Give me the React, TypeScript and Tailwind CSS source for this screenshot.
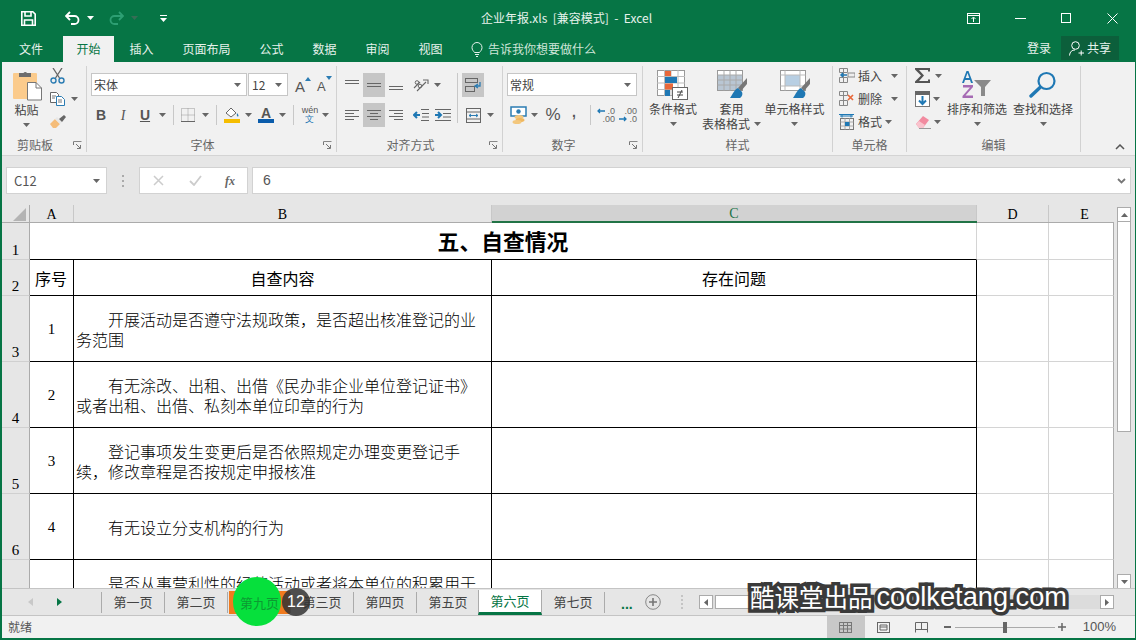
import React from "react";

const FONT = '"Microsoft YaHei","Noto Sans CJK SC","Noto Sans",sans-serif';
const SERIF = '"Liberation Serif","Noto Sans CJK SC",serif';

function Caret({ className = "" }: { className?: string }) {
  return (
    <svg width="7" height="4" viewBox="0 0 7 4" className={className}>
      <path d="M0 0h7L3.5 4z" fill="#666" />
    </svg>
  );
}

function Slot({ w, children, className = "" }: { w: string; children?: React.ReactNode; className?: string }) {
  return <div className={`${w} h-full flex items-center justify-center shrink-0 ${className}`}>{children}</div>;
}

function Launcher() {
  return (
    <div className="w-[18px] h-full flex items-center justify-center shrink-0">
      <svg width="9" height="9" viewBox="0 0 9 9" fill="none">
        <path d="M.5 4V.5H8.5" stroke="#888" />
        <path d="M.5 1v3M3 3l4 4M4 7.5h3.5V4" stroke="#777" />
      </svg>
    </div>
  );
}

function Group({ w, label, launcher, children }: { w: string; label: string; launcher?: boolean; children: React.ReactNode }) {
  return (
    <div className={`${w} shrink-0 pt-[4px]`}>
      <div className="h-[86px] border-r border-[#d2d2d2] flex flex-col">
        <div className="h-[72px]">{children}</div>
        <div className="h-[14px] flex items-center">
          <div className="flex-1 text-center text-[12px] leading-[14px] text-[#666]">{label}</div>
          {launcher && <Launcher />}
        </div>
      </div>
    </div>
  );
}

function Sep({ h = "h-[20px]", className = "" }: { h?: string; className?: string }) {
  return <div className={`w-px ${h} bg-[#c8c8c8] shrink-0 ${className}`} />;
}

function Lines({ spec }: { spec: number[][] }) {
  return (
    <svg width="14" height="12" viewBox="0 0 14 12" fill="none">
      {spec.map(([y, a, b], i) => (
        <path key={i} d={`M${a} ${y + 0.5}H${b}`} stroke="#666" />
      ))}
    </svg>
  );
}

function Paste() {
  return (
    <svg width="30" height="32" viewBox="0 0 30 32" fill="none">
      <rect x="0" y="4" width="24" height="26" rx="1" fill="#fbcb8c" />
      <path d="M6 8V4h4.500a2 2 0 0 1 3.500 0H18v4z" fill="#6d6d6d" />
      <path d="M14.500 13.500H23l5.500 5.500v12H14.500z" fill="#fff" stroke="#777" />
      <path d="M23 13.500V19h5.500" stroke="#777" />
    </svg>
  );
}

function Scissors() {
  return (
    <svg width="15" height="16" viewBox="0 0 15 16" fill="none">
      <path d="M3 0l6.500 10M12 0L5.500 10" stroke="#666" strokeWidth="1.300" />
      <circle cx="3.500" cy="12.500" r="2.500" stroke="#2b7cb3" strokeWidth="1.400" />
      <circle cx="11.500" cy="12.500" r="2.500" stroke="#2b7cb3" strokeWidth="1.400" />
    </svg>
  );
}

function CopyIcon() {
  return (
    <svg width="15" height="14" viewBox="0 0 15 14" fill="none">
      <path d="M.5.500h6l2 2v8H.5z" fill="#fff" stroke="#666" />
      <path d="M6.500 4.500h5l3 3v6h-8z" fill="#fff" stroke="#2b7cb3" />
      <path d="M2 4h4M2 6h3M8 8h4M8 10h4" stroke="#777" />
    </svg>
  );
}

function Brush() {
  return (
    <svg width="16" height="14" viewBox="0 0 16 14">
      <path d="M0 9l5-5 5 5-4 4H3z" fill="#f5bd7a" />
      <path d="M5 4l5 5 2-2-5-5z" fill="#e8e8e8" />
      <path d="M9 4l5-4 2 2-4 5z" fill="#666" />
    </svg>
  );
}

function AGrow({ up }: { up: boolean }) {
  return (
    <div className="relative w-[18px] h-[20px] flex items-end justify-start">
      <span className={`${up ? "text-[15px]" : "text-[13px]"} leading-[16px] text-[#555] font-['Liberation_Sans']`}>A</span>
      <svg width="6" height="4" viewBox="0 0 6 4" className={`absolute ${up ? "left-[10px] top-[2px]" : "left-[9px] top-[1px]"}`}>
        <path d={up ? "M0 4h6L3 0z" : "M0 0h6L3 4z"} fill="#2b7cb3" />
      </svg>
    </div>
  );
}

function Dotted() {
  return (
    <svg width="14" height="14" viewBox="0 0 14 14" fill="none">
      <rect x=".5" y=".5" width="13" height="13" stroke="#999" strokeDasharray="1 1" />
      <path d="M7 .5v13M.5 7h13" stroke="#999" strokeDasharray="1 1" />
      <path d="M0 13.500h14" stroke="#666" />
    </svg>
  );
}

function Bucket() {
  return (
    <svg width="17" height="16" viewBox="0 0 17 16">
      <path d="M2 6l5-5 5 5-5 4z" fill="#fff" stroke="#666" />
      <path d="M13 6c1.500 2 2 3 1 3.500S12.500 8 13 6z" fill="#2b7cb3" />
      <rect y="12" width="16" height="4" fill="#f5bd00" />
    </svg>
  );
}

function FontColor() {
  return (
    <div className="w-[16px] h-[16px] flex flex-col items-center">
      <span className="text-[14px] leading-[12px] text-[#555] font-bold font-['Liberation_Sans']">A</span>
      <div className="w-[16px] h-[4px] bg-[#0a5cab]" />
    </div>
  );
}

function Orientation() {
  return (
    <svg width="17" height="15" viewBox="0 0 17 15" fill="none" stroke="#666">
      <path d="M1 10l6-6M4 13l9-9M10 2h5v4" strokeWidth="1.100" />
      <circle cx="4" cy="4.500" r="1.800" />
      <circle cx="7" cy="8" r="1.800" />
    </svg>
  );
}

function Wrap() {
  return (
    <svg width="16" height="15" viewBox="0 0 16 15" fill="none">
      <rect x=".5" y=".5" width="12" height="4" stroke="#666" />
      <rect x=".5" y="8.500" width="9" height="5" stroke="#666" />
      <path d="M15 4v4h-4M13 6l-3 2 3 2" stroke="#2b7cb3" strokeWidth="1.300" />
    </svg>
  );
}

function Merge() {
  return (
    <svg width="15" height="15" viewBox="0 0 15 15" fill="none" stroke="#666">
      <rect x=".5" y=".5" width="14" height="14" />
      <path d="M.5 4h14M.5 11h14" />
      <path d="M3 7.500h9M3 7.500l2-1.500M3 7.500L5 9M12 7.500L10 6M12 7.500L10 9" stroke="#2b7cb3" />
    </svg>
  );
}

function Indent({ right }: { right?: boolean }) {
  return (
    <svg width="16" height="12" viewBox="0 0 16 12" fill="none">
      {right ? (
        <>
          <path d="M0 6h5M3 3l3 3-3 3" stroke="#1f78b4" strokeWidth="2" />
          <path d="M0 .5h16M8 4.500h8M8 8h8M0 11.500h16" stroke="#666" />
        </>
      ) : (
        <>
          <path d="M7 6H2M4 3L1 6l3 3" stroke="#1f78b4" strokeWidth="2" />
          <path d="M8 .5h8M9 4.500h7M9 8h7M8 11.500h8" stroke="#666" />
        </>
      )}
    </svg>
  );
}

function Currency() {
  return (
    <svg width="17" height="18" viewBox="0 0 17 18">
      <rect x="1" y="1" width="15" height="9" fill="#fff" stroke="#2b7cb3" strokeWidth="1.500" />
      <circle cx="8.500" cy="5.500" r="2.200" fill="#2b7cb3" />
      <ellipse cx="9" cy="11" rx="4.500" ry="2" fill="#f3c77d" />
      <ellipse cx="10" cy="14" rx="4.500" ry="2" fill="#f0b860" />
      <ellipse cx="7" cy="16" rx="4.500" ry="2" fill="#f3c77d" />
    </svg>
  );
}

function DecimalIcon({ dir }: { dir: "inc" | "dec" }) {
  const top = dir === "inc" ? ".0" : ".00";
  const bottom = dir === "inc" ? ".00" : ".0";
  return (
    <div className="w-[18px] h-[16px] relative flex flex-col items-end text-[9px] leading-[8px] text-[#666] font-['Liberation_Sans']">
      <span>{top}</span>
      <span>{bottom}</span>
      <svg width="8" height="6" viewBox="0 0 8 6" className={`absolute left-0 ${dir === "inc" ? "top-[1px]" : "top-[9px]"}`} fill="none">
        {dir === "inc" ? (
          <path d="M8 3H1M3 1L1 3l2 2" stroke="#1f78b4" strokeWidth="1.300" />
        ) : (
          <path d="M0 3h7M5 1l2 2-2 2" stroke="#1f78b4" strokeWidth="1.300" />
        )}
      </svg>
    </div>
  );
}

function CondFormat() {
  return (
    <svg width="32" height="30" viewBox="0 0 32 30" fill="none">
      <rect x=".5" y=".5" width="27" height="25" fill="#fff" stroke="#999" />
      <path d="M7.500 0v26M14 0v26M21 0v26M0 6.500h28M0 13h28M0 19.500h28" stroke="#bbb" />
      <rect x="8" y="1" width="6" height="5" fill="#e8683a" />
      <rect x="8" y="7" width="12" height="6" fill="#1f78b4" />
      <rect x="8" y="13.500" width="8" height="6" fill="#e8683a" />
      <rect x="8" y="20" width="5" height="6" fill="#1f78b4" />
      <rect x="15.500" y="17.500" width="15" height="12" fill="#fff" stroke="#666" />
      <path d="M20 22h6M20 25h6M25 20l-4 8" stroke="#444" />
    </svg>
  );
}

function TableFormat({ cell }: { cell?: boolean }) {
  return (
    <svg width="30" height="30" viewBox="0 0 30 30" fill="none">
      <rect x=".5" y=".5" width="25" height="20" fill="#fff" stroke="#999" />
      {cell ? (
        <>
          <rect x="5" y="5" width="15" height="11" fill="#b8cfe3" />
          <path d="M.5 5h25M.5 16h25M5 .5v20M20 .5v20" stroke="#bbb" />
        </>
      ) : (
        <>
          <rect x="1" y="5" width="24" height="15" fill="#b9c6d3" />
          <path d="M.5 5h25M.5 10h25M.5 15h25M7 .5v20M13 .5v20M19 .5v20" stroke="#aaa" />
        </>
      )}
      <path d="M30 8l-9 10 3 3 6-7z" fill="#777" />
      <path d="M21 18c-4 2-5 6-8 10h10c3-2 3-6 1-7z" fill="#1f78b4" />
    </svg>
  );
}

function CellInsert() {
  return (
    <svg width="16" height="15" viewBox="0 0 16 15" fill="none">
      <path d="M.5.500h8v4h-8zM.5 9.500h8v5h-8zM4.500.500v14" stroke="#888" />
      <path d="M9 5h7v4H9z" stroke="#888" fill="#eee" />
      <path d="M8 7H2M4 5L2 7l2 2" stroke="#1f78b4" strokeWidth="1.500" />
    </svg>
  );
}

function CellDelete() {
  return (
    <svg width="16" height="15" viewBox="0 0 16 15" fill="none">
      <path d="M.5.500h8v4h-8zM.5 9.500h8v5h-8zM4.500.500v14" stroke="#888" />
      <path d="M9 4l5 5M14 4l-5 5" stroke="#e8683a" strokeWidth="1.700" />
    </svg>
  );
}

function CellFormat() {
  return (
    <svg width="16" height="16" viewBox="0 0 16 16" fill="none">
      <path d="M0 .5h15M3 .5v3M12 .5v3M1 2h13" stroke="#1f78b4" />
      <rect x="1.500" y="4.500" width="13" height="11" stroke="#777" />
      <path d="M1.500 8h13M1.500 12h13M6 4.500v11M10.500 4.500v11" stroke="#aaa" />
      <rect x="6" y="8" width="4.500" height="4" fill="#1f78b4" />
    </svg>
  );
}

function Sigma() {
  return (
    <svg width="16" height="15" viewBox="0 0 16 15">
      <path d="M0 0h15v3.500h-2V2H4l5 5.500L4 13h9v-1.500h2V15H0v-1.500L6 7.500 0 1.500z" fill="#555" />
    </svg>
  );
}

function FillDown() {
  return (
    <svg width="15" height="16" viewBox="0 0 15 16" fill="none">
      <rect x=".5" y=".5" width="14" height="15" fill="#fff" stroke="#777" />
      <rect width="15" height="4" fill="#666" />
      <path d="M7.500 5v8M4 9.500l3.500 3.500L11 9.500" stroke="#1f78b4" strokeWidth="2" />
    </svg>
  );
}

function Eraser() {
  return (
    <svg width="15" height="14" viewBox="0 0 15 14">
      <path d="M0 9l7-8 6 4-6 8H3z" fill="#f28ba0" />
      <path d="M0 9l3-3 6 4-2 3H3z" fill="#f9c3cd" />
      <path d="M3 13.500h12" stroke="#999" />
    </svg>
  );
}

function SortFilter() {
  return (
    <svg width="30" height="28" viewBox="0 0 30 28">
      <path d="M0 12L4.500 0h2L11 12H9L8 9H3l-1 3zM3.700 7h3.600L5.500 2z" fill="#1f78b4" />
      <path d="M1 14h10v2l-7.500 8.500H11V27H.5v-2L8 16.500H1z" fill="#a66bb4" />
      <path d="M12 9h17l-6 7v9h-4v-9z" fill="#8a8a8a" />
    </svg>
  );
}

function Search() {
  return (
    <svg width="28" height="28" viewBox="0 0 28 28" fill="none">
      <circle cx="17.500" cy="10" r="8" stroke="#1f78b4" strokeWidth="2.200" />
      <path d="M11 16.500L2 25" stroke="#1f78b4" strokeWidth="3.400" strokeLinecap="round" />
    </svg>
  );
}

function BigButton({ w, icon, lines, caretInline }: { w: string; icon: React.ReactNode; lines: string[]; caretInline?: boolean }) {
  return (
    <div className={`${w} shrink-0 flex flex-col items-center pt-[4px]`}>
      <div className="h-[30px] flex items-center justify-center">{icon}</div>
      <div className="text-[12px] leading-[15px] text-[#444] mt-[1px] text-center whitespace-nowrap">
        {lines[0]}
        {lines[1] && (
          <div className="flex items-center justify-center gap-[4px]">
            {lines[1]}
            {caretInline && <Caret />}
          </div>
        )}
      </div>
      {!caretInline && <Caret className="mt-[6px]" />}
    </div>
  );
}

function CellRow({ icon, label, w }: { icon: React.ReactNode; label: string; w: string }) {
  return (
    <div className="h-[23px] flex items-center">
      <Slot w="w-[20px]" className="ml-[4px]">{icon}</Slot>
      <span className={`${w} ml-[1px] text-[12px] whitespace-nowrap text-[#444]`}>{label}</span>
      <Caret />
    </div>
  );
}

function Ribbon() {
  return (
    <div className="h-[94px] bg-[#f1f1f1] border-b border-[#d4d4d4] flex shrink-0">
      <Group w="w-[85px]" label="剪贴板" launcher>
        <div className="flex h-full">
          <div className="w-[46px] flex flex-col items-center pl-[3px] pt-[3px]">
            <div className="ml-[3px]"><Paste /></div>
            <div className="text-[12px] leading-[14px] text-[#444] mt-[2px]">粘贴</div>
            <Caret className="mt-[6px]" />
          </div>
          <div className="flex flex-col items-start pt-[2px] pl-[2px]">
            <Scissors />
            <div className="mt-[8px] flex items-center gap-[6px]">
              <CopyIcon />
              <Caret />
            </div>
            <div className="mt-[9px]"><Brush /></div>
          </div>
        </div>
      </Group>

      <Group w="w-[250px]" label="字体" launcher>
        <div className="flex h-[23px] mt-[7px] ml-[4px] items-center">
          <div className="w-[156px] h-[23px] bg-white border border-[#c6c6c6] flex items-center justify-between pl-[2px] pr-[5px] text-[12px] text-[#444]">
            宋体 <Caret />
          </div>
          <div className="w-[40px] h-[23px] ml-px bg-white border border-[#c6c6c6] flex items-center justify-between pl-[3px] pr-[5px] text-[12px] text-[#444]">
            12 <Caret />
          </div>
          <div className="ml-[7px]"><AGrow up /></div>
          <div className="ml-[4px]"><AGrow up={false} /></div>
        </div>
        <div className="flex h-[20px] mt-[9px] ml-[5px] items-center text-[#555] font-['Liberation_Sans']">
          <Slot w="w-[18px]"><span className="text-[14px] font-bold">B</span></Slot>
          <Slot w="w-[18px]" className="ml-[4px]"><span className="text-[14px] italic font-['Liberation_Serif']">I</span></Slot>
          <Slot w="w-[18px]" className="ml-[4px]"><span className="text-[14px] font-bold underline">U</span></Slot>
          <Slot w="w-[16px]"><Caret /></Slot>
          <Sep className="ml-[3px]" />
          <Slot w="w-[18px]" className="ml-[5px]"><Dotted /></Slot>
          <Slot w="w-[16px]"><Caret /></Slot>
          <Sep className="ml-[3px]" />
          <Slot w="w-[18px]" className="ml-[6px]"><Bucket /></Slot>
          <Slot w="w-[14px]"><Caret /></Slot>
          <Slot w="w-[18px]" className="ml-[2px]"><FontColor /></Slot>
          <Slot w="w-[14px]"><Caret /></Slot>
          <Sep className="ml-[4px]" />
          <Slot w="w-[18px]" className="ml-[7px]">
            <div className="flex flex-col items-center leading-[9px] text-[9px] text-[#555]">
              <span>wén</span>
              <span className="text-[#1f78b4]">文</span>
            </div>
          </Slot>
          <Slot w="w-[12px]"><Caret /></Slot>
        </div>
      </Group>

      <Group w="w-[166px]" label="对齐方式" launcher>
        <div className="flex h-[24px] mt-[7px] ml-[4px] items-center">
          <Slot w="w-[22px]"><Lines spec={[[1, 0, 14], [4, 0, 14]]} /></Slot>
          <Slot w="w-[22px]" className="bg-[#c6c6c6]"><Lines spec={[[4, 0, 14], [7, 0, 14]]} /></Slot>
          <Slot w="w-[22px]"><Lines spec={[[7, 0, 14], [10, 0, 14]]} /></Slot>
          <Slot w="w-[17px]" className="ml-[6px]"><Orientation /></Slot>
          <Slot w="w-[14px]"><Caret /></Slot>
          <Sep h="h-[50px]" className="ml-[13px] self-start" />
          <Slot w="w-[22px]" className="ml-[4px] bg-[#c6c6c6]"><Wrap /></Slot>
        </div>
        <div className="flex h-[24px] mt-[6px] ml-[4px] items-center">
          <Slot w="w-[22px]"><Lines spec={[[1, 0, 14], [4, 0, 9], [7, 0, 14], [10, 0, 9]]} /></Slot>
          <Slot w="w-[22px]" className="bg-[#c6c6c6]"><Lines spec={[[1, 0, 14], [4, 3, 11], [7, 0, 14], [10, 3, 11]]} /></Slot>
          <Slot w="w-[22px]"><Lines spec={[[1, 0, 14], [4, 5, 14], [7, 0, 14], [10, 5, 14]]} /></Slot>
          <Slot w="w-[22px]" className="ml-[3px]"><Indent /></Slot>
          <Slot w="w-[22px]"><Indent right /></Slot>
          <Slot w="w-[22px]" className="ml-[8px]"><Merge /></Slot>
          <Slot w="w-[12px]"><Caret /></Slot>
        </div>
      </Group>

      <Group w="w-[140px]" label="数字" launcher>
        <div className="w-[130px] h-[23px] mt-[7px] ml-[4px] bg-white border border-[#c6c6c6] flex items-center justify-between pl-[2px] pr-[5px] text-[12px] text-[#444]">
          常规 <Caret />
        </div>
        <div className="flex h-[20px] mt-[9px] ml-[6px] items-center">
          <Slot w="w-[18px]"><Currency /></Slot>
          <Slot w="w-[14px]"><Caret /></Slot>
          <Slot w="w-[20px]" className="ml-[2px]"><span className="text-[17px] text-[#555] font-['Liberation_Sans']">%</span></Slot>
          <Slot w="w-[18px]" className="ml-[2px]"><span className="text-[14px] font-bold text-[#555] font-['Liberation_Sans'] -mt-[5px]">,</span></Slot>
          <Sep className="ml-[7px]" />
          <Slot w="w-[18px]" className="ml-[6px]"><DecimalIcon dir="inc" /></Slot>
          <Slot w="w-[18px]" className="ml-[4px]"><DecimalIcon dir="dec" /></Slot>
        </div>
      </Group>

      <Group w="w-[190px]" label="样式">
        <div className="flex h-full">
          <BigButton w="w-[60px]" icon={<CondFormat />} lines={["条件格式"]} />
          <BigButton w="w-[57px]" icon={<TableFormat />} lines={["套用", "表格格式"]} caretInline />
          <BigButton w="w-[69px]" icon={<TableFormat cell />} lines={["单元格样式"]} />
        </div>
      </Group>

      <Group w="w-[74px]" label="单元格">
        <div className="-mt-[2px]">
          <CellRow icon={<CellInsert />} label="插入" w="w-[33px]" />
          <CellRow icon={<CellDelete />} label="删除" w="w-[33px]" />
          <CellRow icon={<CellFormat />} label="格式" w="w-[27px]" />
        </div>
      </Group>

      <Group w="w-[174px]" label="编辑">
        <div className="flex h-full">
          <div className="w-[40px] flex flex-col -mt-[2px]">
            <div className="h-[23px] flex items-center pl-[8px] gap-[4px]"><Sigma /><Caret /></div>
            <div className="h-[23px] flex items-center pl-[8px] gap-[3px]"><FillDown /><Caret /></div>
            <div className="h-[23px] flex items-center pl-[9px] gap-[3px]"><Eraser /><Caret /></div>
          </div>
          <BigButton w="w-[60px]" icon={<SortFilter />} lines={["排序和筛选"]} />
          <BigButton w="w-[72px]" icon={<Search />} lines={["查找和选择"]} />
        </div>
      </Group>

      <div className="flex-1 flex items-end justify-end pr-[10px] pb-[5px]">
        <svg width="10" height="6" viewBox="0 0 10 6" fill="none">
          <path d="M1 5l4-4 4 4" stroke="#555" strokeWidth="1.500" />
        </svg>
      </div>
    </div>
  );
}

function TitleBar() {
  return (
    <div className="h-[36px] flex items-center shrink-0 relative">
      <div className="w-[19px]" />
      <svg width="15" height="15" viewBox="0 0 15 15" fill="none">
        <path d="M.8.800h11l2.400 2.400v11H.8z" stroke="#fff" strokeWidth="1.600" />
        <path d="M4 1v4h6V1M3.500 14V9h8v5" stroke="#fff" strokeWidth="1.600" />
      </svg>
      <svg width="15" height="14" viewBox="0 0 15 14" fill="none" className="ml-[29px]">
        <path d="M1 5h8.500a4 4 0 0 1 0 8H6M5 1L1 5l4 4" stroke="#fff" strokeWidth="1.800" />
      </svg>
      <Caret className="ml-[7px] brightness-[4]" />
      <svg width="15" height="14" viewBox="0 0 15 14" fill="none" className="ml-[15px] opacity-30">
        <path d="M14 5H5.500a4 4 0 0 0 0 8H9M10 1l4 4-4 4" stroke="#8fd" strokeWidth="1.800" />
      </svg>
      <Caret className="ml-[7px] opacity-50" />
      <svg width="7" height="7" viewBox="0 0 7 7" className="ml-[22px]">
        <path d="M0 .5h7" stroke="#fff" />
        <path d="M0 3h7L3.500 7z" fill="#fff" />
      </svg>
      <div className="ml-[314px] text-[12px] text-[#e6f2ec] whitespace-pre">企业年报.xls  [兼容模式]  -  Excel</div>
      <div className="flex-1" />
      <svg width="13" height="11" viewBox="0 0 13 11" fill="none" className="mr-[35px]">
        <rect x=".5" y=".5" width="12" height="10" stroke="#fff" />
        <path d="M.5 2.500h12M6.500 9V4.500M4.500 6l2-2 2 2" stroke="#fff" />
      </svg>
      <div className="w-[11px] h-px bg-white mr-[35px]" />
      <div className="w-[10px] h-[10px] border border-white mr-[36px]" />
      <svg width="11" height="11" viewBox="0 0 11 11" fill="none" className="mr-[17px]">
        <path d="M.5.500l10 10M10.500.500l-10 10" stroke="#fff" />
      </svg>
    </div>
  );
}

function TabBar() {
  const tabs = ["插入", "页面布局", "公式", "数据", "审阅", "视图"];
  return (
    <div className="h-[26px] flex items-stretch text-[12px] text-[#e6f2ec] shrink-0">
      <div className="w-[47px] pl-[17px] flex items-center">文件</div>
      <div className="ml-[14px] w-[51px] bg-[#f1f1f1] text-[#067545] flex items-center justify-center">开始</div>
      {tabs.map((t) => (
        <div key={t} className="ml-[2px] px-[13.5px] flex items-center first:ml-[1px]">{t}</div>
      ))}
      <div className="ml-[15px] flex items-center gap-[5px] text-[#cfe5d9]">
        <svg width="12" height="15" viewBox="0 0 12 15" fill="none">
          <path d="M3.500 10.500C2.500 9 1 8 1 5.500a5 5 0 0 1 10 0C11 8 9.500 9 8.500 10.500zM4 12.500h4M5 14.500h2" stroke="#e6f2ec" />
        </svg>
        告诉我你想要做什么
      </div>
      <div className="flex-1" />
      <div className="flex items-center mr-[10px] -mt-[2px]">登录</div>
      <div className="w-[58px] h-[24px] bg-[#0c5f3b] flex items-center pl-[8px] gap-[3px] mr-[16px]">
        <svg width="15" height="15" viewBox="0 0 15 15" fill="none">
          <circle cx="6.500" cy="4.500" r="3.800" stroke="#fff" />
          <path d="M.5 14.500c.5-4 2.500-5.500 5.500-5.500M9.500 12h5.500M12.200 9.500v5" stroke="#fff" />
        </svg>
        共享
      </div>
    </div>
  );
}

function FormulaBar() {
  return (
    <div className="h-[49px] bg-[#e6e6e6] flex items-center shrink-0">
      <div className="w-[101px] h-[27px] ml-[4px] bg-white border border-[#d2d2d2] flex items-center justify-between pl-[7px] pr-[6px] text-[13px] text-[#555]">
        C12 <Caret />
      </div>
      <div className="w-[32px] flex flex-col items-center gap-[3px]">
        <div className="w-[2px] h-[2px] bg-[#aaa]" />
        <div className="w-[2px] h-[2px] bg-[#aaa]" />
        <div className="w-[2px] h-[2px] bg-[#aaa]" />
      </div>
      <div className="w-[109px] h-[27px] bg-white border border-[#d2d2d2] flex items-center">
        <Slot w="w-[37px]">
          <svg width="11" height="11" viewBox="0 0 11 11" fill="none"><path d="M1 1l9 9M10 1l-9 9" stroke="#ccc" strokeWidth="1.500" /></svg>
        </Slot>
        <Slot w="w-[36px]">
          <svg width="13" height="11" viewBox="0 0 13 11" fill="none"><path d="M1 6l4 4 7-9" stroke="#ccc" strokeWidth="1.800" /></svg>
        </Slot>
        <Slot w="w-[34px]"><span className="text-[12px] italic font-bold text-[#666] font-['Liberation_Serif']">fx</span></Slot>
      </div>
      <div className="flex-1 h-[27px] ml-[4px] mr-[4px] bg-white border border-[#d2d2d2] flex items-center justify-between pl-[10px] pr-[4px] text-[14px] text-[#555] font-['Liberation_Sans']">
        6
        <svg width="9" height="6" viewBox="0 0 9 6" fill="none"><path d="M1 1l3.500 3.500L8 1" stroke="#777" strokeWidth="1.800" /></svg>
      </div>
    </div>
  );
}

function ColHead({ w, label, active, last }: { w: string; label: string; active?: boolean; last?: boolean }) {
  return (
    <div
      className={`${w} shrink-0 flex items-end justify-center text-[14px] leading-[15px] border-b ${
        active ? "bg-[#d2d2d2] border-b-2 border-[#217346] text-[#217346]" : "border-[#ababab] text-black"
      }`}
      style={{ fontFamily: SERIF }}
    >
      <div className={`w-full h-full flex items-end justify-center ${last ? "pl-[6px]" : "border-r border-[#c8c8c8]"}`}>{label}</div>
    </div>
  );
}

const rows = [
  { n: "3", no: "1", h: "h-[66px]", lines: ["开展活动是否遵守法规政策，是否超出核准登记的业", "务范围"] },
  { n: "4", no: "2", h: "h-[66px]", lines: ["有无涂改、出租、出借《民办非企业单位登记证书》", "或者出租、出借、私刻本单位印章的行为"] },
  { n: "5", no: "3", h: "h-[66px]", lines: ["登记事项发生变更后是否依照规定办理变更登记手", "续，修改章程是否按规定申报核准"] },
  { n: "6", no: "4", h: "h-[66px]", lines: ["有无设立分支机构的行为"] },
  { n: "7", no: "5", h: "h-[66px]", lines: ["是否从事营利性的经营活动或者将本单位的积累用于", "其他"] },
];

function RowHead({ n }: { n: string }) {
  return (
    <div className="w-[28px] shrink-0 bg-[#e6e6e6] border-r border-b border-r-[#ababab] border-b-[#d0d0d0] flex items-end justify-center text-[15px] leading-[18px]" style={{ fontFamily: SERIF }}>
      {n}
    </div>
  );
}

function Blank() {
  return (
    <>
      <div className="w-[72px] shrink-0 border-r border-b border-[#d4d4d4]" />
      <div className="w-[65px] shrink-0 border-r border-b border-b-[#d4d4d4] border-r-[#ababab]" />
    </>
  );
}

function Sheet() {
  const cjk = { fontFamily: FONT };
  return (
    <div className="flex-1 min-h-0 flex bg-[#e6e6e6]">
      <div className="w-[1112px] flex flex-col min-h-0">
        <div className="h-[18px] flex shrink-0">
          <div className="w-[28px] shrink-0 border-b border-r border-[#ababab] flex items-end justify-end pr-[3px] pb-[1px]">
            <svg width="13" height="13" viewBox="0 0 13 13"><path d="M13 0v13H0z" fill="#b4b4b4" /></svg>
          </div>
          <ColHead w="w-[44px]" label="A" />
          <ColHead w="w-[418px]" label="B" />
          <ColHead w="w-[485px]" label="C" active />
          <ColHead w="w-[72px]" label="D" />
          <ColHead w="w-[65px]" label="E" last />
        </div>
        <div className="flex-1 min-h-0 overflow-hidden bg-white text-black">
          <div className="flex h-[37px]">
            <RowHead n="1" />
            <div className="w-[947px] shrink-0 border-b border-black border-r-[#d4d4d4] border-r flex items-center justify-center text-[21.800px] font-bold" style={cjk}>五、自查情况</div>
            <Blank />
          </div>
          <div className="flex h-[36px]">
            <RowHead n="2" />
            <div className="w-[44px] shrink-0 border-r border-b border-black flex items-center justify-center text-[16px] pr-[1px]">序号</div>
            <div className="w-[418px] shrink-0 border-r border-b border-black flex items-center justify-center text-[16px]">自查内容</div>
            <div className="w-[485px] shrink-0 border-r border-b border-black flex items-center justify-center text-[16px]">存在问题</div>
            <Blank />
          </div>
          {rows.map((r) => (
            <div key={r.n} className={`flex ${r.h}`}>
              <RowHead n={r.n} />
              <div className="w-[44px] shrink-0 border-r border-b border-black flex items-center justify-center text-[15px] font-['Liberation_Serif'] pt-[1px]">{r.no}</div>
              <div className="w-[418px] shrink-0 border-r border-b border-black flex items-center pl-[2px] text-[16px] leading-[20px] font-light whitespace-nowrap">
                <div>
                  {r.lines.map((l, i) => (
                    <div key={i} className={i === 0 ? "pl-[32px]" : ""}>{l}</div>
                  ))}
                </div>
              </div>
              <div className="w-[485px] shrink-0 border-r border-b border-black" />
              <Blank />
            </div>
          ))}
        </div>
      </div>
      <div className="w-[14px] ml-[3px] mt-[2px] flex flex-col shrink-0">
        <div className="h-[15px] bg-white border border-[#ababab] flex items-center justify-center shrink-0">
          <svg width="7" height="4" viewBox="0 0 7 4"><path d="M0 4h7L3.500 0z" fill="#666" /></svg>
        </div>
        <div className="h-[210px] bg-white border-x border-b border-[#ababab] shrink-0" />
        <div className="flex-1" />
        <div className="h-[15px] bg-white border border-[#ababab] flex items-center justify-center shrink-0">
          <Caret />
        </div>
      </div>
    </div>
  );
}

function SheetTab({ label, active, orange }: { label: string; active?: boolean; orange?: boolean }) {
  if (active) {
    return (
      <div className="w-[64px] h-[25px] shrink-0 bg-white border-x border-t-0 border-[#ababab] border-b-[3px] border-b-[#067545] text-[#067545] flex items-center justify-center text-[13px] -ml-px -mr-px">
        {label}
      </div>
    );
  }
  return (
    <div className="w-[63px] shrink-0 flex items-center">
      <div className="w-px h-[21px] bg-[#ababab] shrink-0" />
      {orange ? (
        <div className="flex-1 text-center text-[13px] bg-[#f07a1e] h-[23px] leading-[23px] ml-[1px]">
          <span className="relative z-20 text-[#0c9a32]">{label}</span>
        </div>
      ) : (
        <div className="flex-1 text-center text-[13px] text-[#444]">{label}</div>
      )}
    </div>
  );
}

function TabStrip() {
  return (
    <div className="h-[28px] bg-[#e6e6e6] border-t border-b border-[#c4c4c4] flex items-start shrink-0 -mt-px">
      <div className="w-[99px] h-[26px] flex items-center shrink-0">
        <svg width="5" height="8" viewBox="0 0 5 8" className="ml-[26px]"><path d="M5 0v8L0 4z" fill="#c8c8c8" /></svg>
        <svg width="5" height="8" viewBox="0 0 5 8" className="ml-[24px]"><path d="M0 0v8l5-4z" fill="#067545" /></svg>
      </div>
      <div className="flex h-[26px] items-center">
        <SheetTab label="第一页" />
        <SheetTab label="第二页" />
        <SheetTab label="第九页" orange />
        <SheetTab label="第三页" />
        <SheetTab label="第四页" />
        <SheetTab label="第五页" />
        <SheetTab label="第六页" active />
        <SheetTab label="第七页" />
        <div className="w-px h-[21px] bg-[#ababab] shrink-0" />
      </div>
      <div className="h-[26px] flex items-center">
        <span className="ml-[16px] text-[14px] font-bold leading-[14px] text-[#067545] font-['Liberation_Sans'] mt-[3px]">...</span>
        <svg width="16" height="16" viewBox="0 0 16 16" fill="none" className="ml-[12px]">
          <circle cx="8" cy="8" r="7.300" stroke="#888" />
          <path d="M8 4v8M4 8h8" stroke="#777" strokeWidth="1.600" />
        </svg>
        <div className="ml-[20px] flex flex-col gap-[2px] mr-[16px]">
          <div className="w-[2px] h-[2px] bg-[#c4c4c4]" />
          <div className="w-[2px] h-[2px] bg-[#c4c4c4]" />
          <div className="w-[2px] h-[2px] bg-[#c4c4c4]" />
          <div className="w-[2px] h-[2px] bg-[#c4c4c4]" />
        </div>
        <div className="w-[14px] h-[14px] bg-white border border-[#ababab] flex items-center justify-center shrink-0">
          <svg width="4" height="7" viewBox="0 0 4 7"><path d="M4 0v7L0 3.500z" fill="#666" /></svg>
        </div>
        <div className="w-[387px] h-[14px] bg-[#dcdcdc] flex shrink-0">
          <div className="w-[90px] h-full bg-white border border-[#ababab] ml-[2px]" />
        </div>
        <div className="w-[14px] h-[14px] bg-white border border-[#ababab] flex items-center justify-center shrink-0">
          <svg width="4" height="7" viewBox="0 0 4 7"><path d="M0 0v7l4-3.500z" fill="#666" /></svg>
        </div>
      </div>
    </div>
  );
}

function StatusBar() {
  return (
    <div className="h-[22px] bg-[#f1f1f1] flex items-center text-[12px] text-[#555] shrink-0">
      <span className="ml-[6px]">就绪</span>
      <div className="flex-1" />
      <div className="w-[38px] h-full bg-[#c8c8c8] flex items-center justify-center">
        <svg width="13" height="11" viewBox="0 0 13 11" fill="none">
          <rect x=".5" y=".5" width="12" height="10" stroke="#777" />
          <path d="M4.500 0v11M8.500 0v11M0 3.500h13M0 7h13" stroke="#777" />
        </svg>
      </div>
      <div className="w-[38px] flex items-center justify-center">
        <svg width="13" height="11" viewBox="0 0 13 11" fill="none">
          <rect x=".5" y=".5" width="12" height="10" stroke="#666" />
          <path d="M3 3h7v5H3zM3 5h7" stroke="#666" />
        </svg>
      </div>
      <div className="w-[38px] flex items-center justify-center">
        <svg width="13" height="11" viewBox="0 0 13 11" fill="none">
          <path d="M.5 10.500V.5h12v10M.5 7.500h12M6.500.5v7" stroke="#666" />
        </svg>
      </div>
      <div className="w-[7px] h-[2px] bg-[#666] ml-[3px]" />
      <div className="w-[100px] ml-[4px] h-px bg-[#aaa] flex justify-center items-center">
        <div className="w-[4px] h-[11px] bg-[#666]" />
      </div>
      <svg width="8" height="8" viewBox="0 0 8 8" className="ml-[3px]"><path d="M4 0v8M0 4h8" stroke="#666" strokeWidth="1.500" /></svg>
      <span className="ml-[17px] mr-[19px] font-['Liberation_Sans'] text-[13px]">100%</span>
    </div>
  );
}

export default function App() {
  return (
    <div
      className="relative w-[1136px] h-[640px] overflow-hidden bg-[#067545] border-l-2 border-r border-b-2 border-[#067545] flex flex-col"
      style={{ fontFamily: FONT }}
    >
      <TitleBar />
      <TabBar />
      <Ribbon />
      <FormulaBar />
      <Sheet />
      <TabStrip />
      <StatusBar />

      <div className="absolute z-10 left-[231px] top-[577px] w-[48px] h-[49px] rounded-full bg-[#06e03c]" />
      <div className="absolute left-[280px] top-[588px] w-[28px] h-[28px] rounded-full bg-[#333]/85 flex items-center justify-center text-white text-[16px] font-['Liberation_Sans']">12</div>
      <div className="absolute left-[748px] top-[581px] flex items-center text-white whitespace-nowrap [paint-order:stroke_fill] [-webkit-text-stroke:7px_#3a3a3a]">
        <span className="text-[24.500px] leading-[32px]">酷课堂出品</span>
        <span className="text-[27.200px] leading-[32px] ml-[4px] font-['Liberation_Sans']">coolketang.com</span>
      </div>
    </div>
  );
}
